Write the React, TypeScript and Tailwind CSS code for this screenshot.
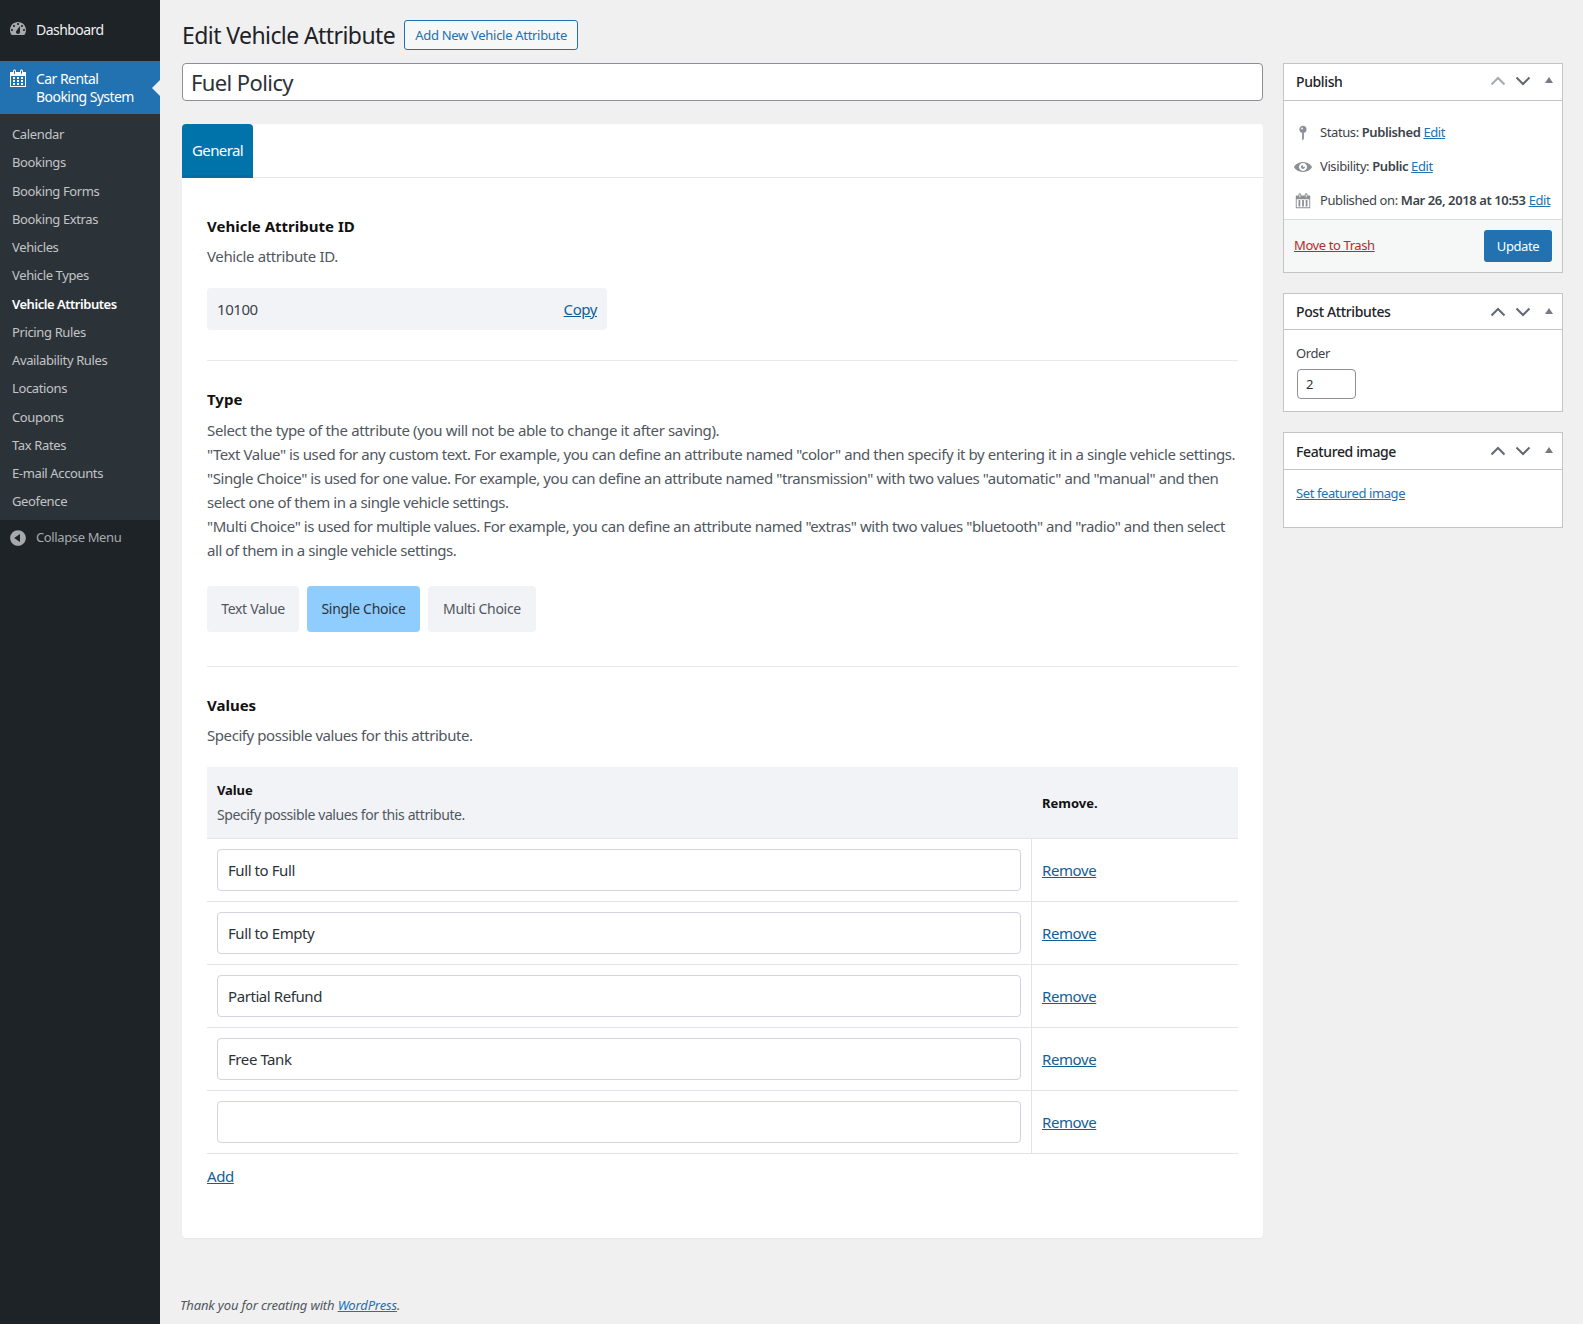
import React from 'react';

const menuItems = [
  'Calendar',
  'Bookings',
  'Booking Forms',
  'Booking Extras',
  'Vehicles',
  'Vehicle Types',
  'Vehicle Attributes',
  'Pricing Rules',
  'Availability Rules',
  'Locations',
  'Coupons',
  'Tax Rates',
  'E-mail Accounts',
  'Geofence',
];

const values = ['Full to Full', 'Full to Empty', 'Partial Refund', 'Free Tank', ''];

const BoxControls = ({ upMuted = false }: { upMuted?: boolean }) => (
  <div className="flex items-center mr-[8px]">
    <svg width="16" height="10" viewBox="0 0 16 10" fill="none" className="mr-[9px]">
      <path d="M1.5 8.5l6.5-6.5 6.5 6.5" stroke={upMuted ? '#a7aaad' : '#646970'} strokeWidth="2" />
    </svg>
    <svg width="16" height="10" viewBox="0 0 16 10" fill="none" className="mr-[13px]">
      <path d="M1.5 1.5l6.5 6.5 6.5-6.5" stroke="#646970" strokeWidth="2" />
    </svg>
    <svg width="10" height="6" viewBox="0 0 10 6" className="mb-[2px]">
      <path d="M5 0l4 6H1z" fill="#787c82" />
    </svg>
  </div>
);

const MetaBox = ({
  title,
  upMuted,
  headerClass,
  children,
}: {
  title: string;
  upMuted?: boolean;
  headerClass: string;
  children: React.ReactNode;
}) => (
  <div className="border border-[#c3c4c7] bg-white">
    <div className={`flex items-center justify-between pl-3 border-b border-[#c3c4c7] ${headerClass}`}>
      <span className="text-[14px] font-medium text-[#1d2327] tracking-[-0.38px]">{title}</span>
      <BoxControls upMuted={upMuted} />
    </div>
    {children}
  </div>
);

const App = () => {
  return (
    <div className="flex min-h-[1324px] bg-[#f0f0f1] font-['Noto_Sans',sans-serif] text-[#3c434a]">
      <aside className="w-[160px] shrink-0 bg-[#1d2327] pt-3 text-[13px] tracking-[-0.37px]">
        <div className="flex items-center h-[35px] pl-2 text-[#f0f0f1] text-[14px] tracking-[-0.55px]">
          <svg width="20" height="20" viewBox="0 0 20 20" fill="#a7aaad" fillRule="evenodd" className="mr-[8px] mb-[1px]">
            <path d="M3.76 16h12.48c1.1-1.37 1.76-3.11 1.76-5 0-4.42-3.58-8-8-8s-8 3.58-8 8c0 1.89.66 3.63 1.76 5zM10 4c.55 0 1 .45 1 1s-.45 1-1 1-1-.45-1-1 .45-1 1-1zM6 6c.55 0 1 .45 1 1s-.45 1-1 1-1-.45-1-1 .45-1 1-1zm8 0c.55 0 1 .45 1 1s-.45 1-1 1-1-.45-1-1 .45-1 1-1zm-5.37 5.55L12 7v6c0 1.1-.9 2-2 2s-2-.9-2-2c0-.57.24-1.08.63-1.45zM4 10c.55 0 1 .45 1 1s-.45 1-1 1-1-.45-1-1 .45-1 1-1zm12 0c.55 0 1 .45 1 1s-.45 1-1 1-1-.45-1-1 .45-1 1-1z" />
          </svg>
          <span>Dashboard</span>
        </div>
        <div className="relative mt-[14px] h-[53px] bg-[#2271b1] text-white flex pl-2 pt-[9px] text-[14px] leading-[18px] tracking-[-0.55px]">
          <svg width="20" height="20" viewBox="0 0 20 20" fill="#fff" className="mr-[8px] -mt-[2px]">
            <path d="M15 4h3v15H2V4h3V3c0-.41.15-.76.44-1.06.29-.29.65-.44 1.06-.44s.77.15 1.06.44c.29.3.44.65.44 1.06v1h4V3c0-.41.15-.76.44-1.06.29-.29.65-.44 1.06-.44s.77.15 1.06.44c.29.3.44.65.44 1.06v1zM6 3v2.5c0 .14.05.26.15.36.09.09.21.14.35.14s.26-.05.35-.14c.1-.1.15-.22.15-.36V3c0-.14-.05-.26-.15-.35-.09-.1-.21-.15-.35-.15s-.26.05-.35.15c-.1.09-.15.21-.15.35zm7 0v2.5c0 .14.05.26.14.36.1.09.22.14.36.14s.26-.05.36-.14c.09-.1.14-.22.14-.36V3c0-.14-.05-.26-.14-.35-.1-.1-.22-.15-.36-.15s-.26.05-.36.15c-.09.09-.14.21-.14.35zm4 15V8H3v10h14zM7 9v2H5V9h2zm2 0h2v2H9V9zm4 2V9h2v2h-2zm-6 1v2H5v-2h2zm2 0h2v2H9v-2zm4 2v-2h2v2h-2zm-6 1v2H5v-2h2zm4 2H9v-2h2v2zm4 0h-2v-2h2v2z" />
          </svg>
          <span>
            Car Rental
            <br />
            Booking System
          </span>
          <span className="absolute right-0 top-[19px] border-y-[8px] border-r-[8px] border-y-transparent border-r-[#f0f0f1]" />
        </div>
        <ul className="bg-[#2c3338] pt-[6px] pb-[4.5px]">
          {menuItems.map((item) => (
            <li
              key={item}
              className={
                item === 'Vehicle Attributes'
                  ? 'h-[28.25px] leading-[28px] pl-3 text-white font-semibold tracking-[-0.47px]'
                  : 'h-[28.25px] leading-[28.25px] pl-3 text-[#c3c4c7]'
              }
            >
              {item}
            </li>
          ))}
        </ul>
        <div className="flex items-center h-[34px] pt-[2px] pl-2 text-[#a7aaad]">
          <svg width="20" height="20" viewBox="0 0 20 20" fill="#a7aaad" className="mr-[8px]">
            <path d="M10 2.16c4.33 0 7.84 3.51 7.84 7.84s-3.51 7.84-7.84 7.84S2.16 14.33 2.16 10 5.71 2.16 10 2.16zm2 11.72V6.12L6.18 9.97z" />
          </svg>
          <span>Collapse Menu</span>
        </div>
      </aside>

      <main className="flex-1 pl-[22px] pr-5 pt-5">
        <div className="flex items-center h-[30px]">
          <h1 className="text-[23px] text-[#1d2327] tracking-[-0.58px]">Edit Vehicle Attribute</h1>
          <a className="ml-[9px] h-[30px] w-[174px] pt-[2px] flex items-center justify-center rounded-[3px] border border-[#2271b1] bg-[#f6f7f7] text-[13px] text-[#2271b1] tracking-[-0.3px]">
            Add New Vehicle Attribute
          </a>
        </div>

        <div className="flex gap-5 mt-[13px]">
          <div className="w-[1081px]">
            <input
              readOnly
              value="Fuel Policy"
              className="w-full h-[38px] rounded-[4px] border border-[#8c8f94] bg-white px-2 text-[22px] text-[#2c3338] outline-none tracking-[-0.6px]"
            />

            <div className="mt-[23px] h-[1114px] rounded-[4px] bg-white shadow-[0_1px_1px_rgba(0,0,0,0.04)]">
              <div className="h-[54px] border-b border-[#e5e7eb]">
                <div className="w-[71px] h-[54px] pt-[2px] flex items-center justify-center rounded-t-[4px] bg-[#0073aa] border-b-[3px] border-[#0a6ba0] text-white text-[15px] tracking-[-0.6px]">
                  General
                </div>
              </div>

              <div className="px-[25px] pt-9 text-[15px] leading-6 text-[#50575e] tracking-[-0.43px]">
                <h3 className="font-bold text-[#111] leading-6 tracking-[0px]">Vehicle Attribute ID</h3>
                <p className="mt-[6px] tracking-[-0.38px]">Vehicle attribute ID.</p>
                <div className="mt-5 w-[400px] h-[42px] rounded-[4px] bg-[#f2f3f7] flex items-center justify-between px-[10px]">
                  <span className="text-[#3c434a]">10100</span>
                  <a className="underline text-[#135e96]">Copy</a>
                </div>
                <hr className="mt-[30px] border-[#e8e9ed]" />

                <h3 className="mt-[26px] font-bold text-[#111] leading-6 tracking-[0px]">Type</h3>
                <p className="mt-[7px] mb-[24px] whitespace-nowrap">
                  <span className="tracking-[-0.36px]">Select the type of the attribute (you will not be able to change it after saving).</span>
                  <br />
                  "Text Value" is used for any custom text. For example, you can define an attribute named "color" and then specify it by entering it in a single vehicle settings.
                  <br />
                  "Single Choice" is used for one value. For example, you can define an attribute named "transmission" with two values "automatic" and "manual" and then
                  <br />
                  select one of them in a single vehicle settings.
                  <br />
                  "Multi Choice" is used for multiple values. For example, you can define an attribute named "extras" with two values "bluetooth" and "radio" and then select
                  <br />
                  all of them in a single vehicle settings.
                </p>
                <div className="flex gap-2 text-[14px] tracking-[-0.3px]">
                  <div className="w-[92px] h-[46px] rounded-[4px] bg-[#f2f3f7] flex items-center justify-center">Text Value</div>
                  <div className="w-[113px] h-[46px] rounded-[4px] bg-[#90cdff] text-[#2c3338] flex items-center justify-center">Single Choice</div>
                  <div className="w-[108px] h-[46px] rounded-[4px] bg-[#f2f3f7] flex items-center justify-center">Multi Choice</div>
                </div>
                <hr className="mt-[34px] border-[#e8e9ed]" />

                <h3 className="mt-[26px] font-bold text-[#111] leading-6 tracking-[0px]">Values</h3>
                <p className="mt-[6px]">Specify possible values for this attribute.</p>

                <div className="mt-5">
                  <div className="flex h-[72px] bg-[#f2f3f7] border-b border-[#e3e4ea]">
                    <div className="w-[825px] pl-[10px] pt-[11px] leading-[25px]">
                      <div className="font-bold text-[#111] text-[13px] tracking-[-0.1px]">Value</div>
                      <div className="text-[14px] tracking-[-0.4px] -mt-[1px]">Specify possible values for this attribute.</div>
                    </div>
                    <div className="flex items-center pl-[10px] text-[13px] font-bold text-[#111] tracking-[0px]">Remove.</div>
                  </div>
                  {values.map((value, i) => (
                    <div key={i} className="flex h-[63px] border-b border-[#e3e4ea]">
                      <div className="w-[825px] border-r border-[#e3e4ea] px-[10px] py-[10px]">
                        <input
                          readOnly
                          value={value}
                          className="w-full h-[42px] rounded-[4px] border border-[#d3d3e2] px-[10px] text-[15px] text-[#2c3338] outline-none tracking-[-0.42px]"
                        />
                      </div>
                      <div className="flex items-center pl-[10px]">
                        <a className="underline text-[#135e96] tracking-[-0.4px]">Remove</a>
                      </div>
                    </div>
                  ))}
                </div>
                <a className="block mt-[10px] underline text-[#135e96]">Add</a>
              </div>
            </div>

            <p className="mt-[58px] -ml-[2px] text-[13px] italic text-[#50575e] tracking-[-0.15px]">
              Thank you for creating with <a className="underline text-[#2271b1]">WordPress</a>.
            </p>
          </div>

          <div className="w-[280px] flex flex-col gap-5 text-[13px] tracking-[-0.4px]">
            <MetaBox title="Publish" upMuted headerClass="h-[37px] pb-[2px]">
              <div className="h-[118px] pl-[10px] pt-[15px]">
                <div className="flex items-center h-[34px]">
                  <svg width="18" height="18" viewBox="0 0 20 20" fill="#8c8f94" className="mr-[8px]">
                    <path d="M14 6c0 1.86-1.28 3.41-3 3.86V16c0 1-2 2-2 2V9.86c-1.72-.45-3-2-3-3.86 0-2.21 1.79-4 4-4s4 1.79 4 4zM8 5c0 .55.45 1 1 1s1-.45 1-1-.45-1-1-1-1 .45-1 1z" />
                  </svg>
                  <span>
                    Status: <b className="font-semibold">Published</b>{' '}
                    <a className="underline text-[#2271b1]">Edit</a>
                  </span>
                </div>
                <div className="flex items-center h-[34px]">
                  <svg width="18" height="18" viewBox="0 0 20 20" fill="#8c8f94" className="mr-[8px]">
                    <path d="M10 4.4C3.439 4.4 0 9.232 0 10c0 .766 3.439 5.6 10 5.6 6.56 0 10-4.834 10-5.6 0-.768-3.44-5.6-10-5.6zm0 9.907c-2.455 0-4.445-1.928-4.445-4.307S7.545 5.691 10 5.691s4.444 1.93 4.444 4.309-1.989 4.307-4.444 4.307zM10 10c-.407-.447.663-2.154 0-2.154-1.228 0-2.223.965-2.223 2.154s.995 2.154 2.223 2.154c1.227 0 2.223-.965 2.223-2.154 0-.547-1.877.379-2.223 0z" />
                  </svg>
                  <span>
                    Visibility: <b className="font-semibold">Public</b>{' '}
                    <a className="underline text-[#2271b1]">Edit</a>
                  </span>
                </div>
                <div className="flex items-center h-[34px]">
                  <svg width="18" height="18" viewBox="0 0 20 20" fill="#8c8f94" className="mr-[8px]">
                    <path d="M15 4h3v14H2V4h3V3c0-.83.67-1.5 1.5-1.5S8 2.17 8 3v1h4V3c0-.83.67-1.5 1.5-1.5S15 2.17 15 3v1zM6 3v2.5c0 .28.22.5.5.5s.5-.22.5-.5V3c0-.28-.22-.5-.5-.5S6 2.72 6 3zm7 0v2.5c0 .28.22.5.5.5s.5-.22.5-.5V3c0-.28-.22-.5-.5-.5s-.5.22-.5.5zm4 14V8H3v9h14zM7 16V9H5v7h2zm4 0V9H9v7h2zm4 0V9h-2v7h2z" />
                  </svg>
                  <span>
                    Published on: <b className="font-semibold">Mar 26, 2018 at 10:53</b>{' '}
                    <a className="underline text-[#2271b1]">Edit</a>
                  </span>
                </div>
              </div>
              <div className="flex items-center justify-between h-[53px] border-t border-[#dcdcde] bg-[#f6f7f7] pl-[10px] pr-[10px]">
                <a className="underline text-[#b32d2e]">Move to Trash</a>
                <button className="w-[68px] h-[32px] pt-[2px] rounded-[3px] bg-[#2271b1] text-white">Update</button>
              </div>
            </MetaBox>

            <MetaBox title="Post Attributes" headerClass="h-[36px]">
              <div className="h-[81px] pl-3 pt-[13px]">
                <div className="leading-[20px]">Order</div>
                <input
                  readOnly
                  value="2"
                  className="mt-[6px] ml-[1px] block w-[59px] h-[30px] rounded-[4px] border border-[#8c8f94] px-2 text-[#2c3338] outline-none"
                />
              </div>
            </MetaBox>

            <MetaBox title="Featured image" headerClass="h-[37px]">
              <div className="h-[57px] pl-3 pt-[14px]">
                <a className="underline text-[#2271b1]">Set featured image</a>
              </div>
            </MetaBox>
          </div>
        </div>
      </main>
    </div>
  );
};

export default App;
